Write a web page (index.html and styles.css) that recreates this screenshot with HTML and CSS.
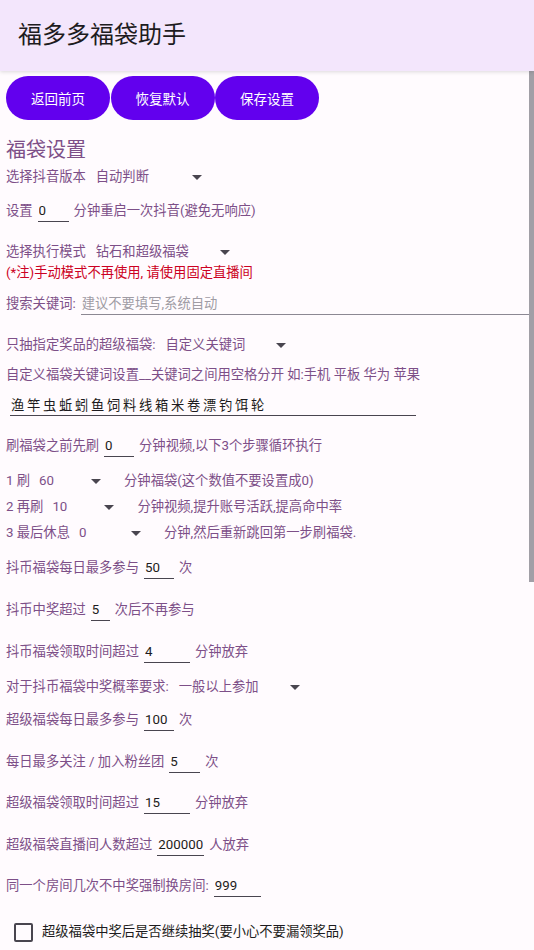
FILE: index.html
```html
<!DOCTYPE html>
<html lang="zh-CN">
<head>
<meta charset="utf-8">
<title>福多多福袋助手</title>
<link rel="stylesheet" href="styles.css">
</head>
<body>
<header class="appbar">
  <h1 class="appbar-title">福多多福袋助手</h1>
</header>
<main class="content">
  <div class="actions">
    <button class="btn">返回前页</button>
    <button class="btn">恢复默认</button>
    <button class="btn">保存设置</button>
  </div>

  <h2 class="section-title">福袋设置</h2>

  <div class="row gap-3">
    <span>选择抖音版本</span>
    <div class="spinner sp-106"><span>自动判断</span><span class="caret"></span></div>
  </div>

  <div class="row gap-14">
    <span>设置</span>
    <input class="field w-31" value="0">
    <span>分钟重启一次抖音(避免无响应)</span>
  </div>

  <div class="row gap-21">
    <span>选择执行模式</span>
    <div class="spinner sp-134"><span>钻石和超级福袋</span><span class="caret"></span></div>
  </div>

  <div class="row gap-1 warn">(*注)手动模式不再使用, 请使用固定直播间</div>

  <div class="row gap-11">
    <span>搜索关键词:</span>
    <input class="field field-wide" placeholder="建议不要填写,系统自动">
  </div>

  <div class="row gap-21">
    <span>只抽指定奖品的超级福袋:</span>
    <div class="spinner sp-120"><span>自定义关键词</span><span class="caret"></span></div>
  </div>

  <div class="row gap-10">自定义福袋关键词设置__关键词之间用空格分开 如:手机 平板 华为 苹果</div>

  <div class="row gap-10">
    <input class="field field-keywords" value="渔 竿 虫 蚯 蚓 鱼 饲 料 线 箱 米 卷 漂 钓 饵 轮">
  </div>

  <div class="row gap-21">
    <span>刷福袋之前先刷</span>
    <input class="field w-30" value="0">
    <span>分钟视频,以下3个步骤循环执行</span>
  </div>

  <div class="row gap-15">
    <span>1 刷</span>
    <div class="spinner sp-num"><span>60</span><span class="caret"></span></div>
    <span>分钟福袋(这个数值不要设置成0)</span>
  </div>

  <div class="row gap-6">
    <span>2 再刷</span>
    <div class="spinner sp-num"><span>10</span><span class="caret"></span></div>
    <span>分钟视频,提升账号活跃,提高命中率</span>
  </div>

  <div class="row gap-6">
    <span>3 最后休息</span>
    <div class="spinner sp-num"><span>0</span><span class="caret"></span></div>
    <span>分钟,然后重新跳回第一步刷福袋.</span>
  </div>

  <div class="row gap-15">
    <span>抖币福袋每日最多参与</span>
    <input class="field w-30" value="50">
    <span>次</span>
  </div>

  <div class="row gap-22">
    <span>抖币中奖超过</span>
    <input class="field w-19" value="5">
    <span>次后不再参与</span>
  </div>

  <div class="row gap-22">
    <span>抖币福袋领取时间超过</span>
    <input class="field w-46" value="4">
    <span>分钟放弃</span>
  </div>

  <div class="row gap-15">
    <span>对于抖币福袋中奖概率要求:</span>
    <div class="spinner sp-121"><span>一般以上参加</span><span class="caret"></span></div>
  </div>

  <div class="row gap-13">
    <span>超级福袋每日最多参与</span>
    <input class="field w-30" value="100">
    <span>次</span>
  </div>

  <div class="row gap-22">
    <span>每日最多关注 / 加入粉丝团</span>
    <input class="field w-31" value="5">
    <span>次</span>
  </div>

  <div class="row gap-21">
    <span>超级福袋领取时间超过</span>
    <input class="field w-46" value="15">
    <span>分钟放弃</span>
  </div>

  <div class="row gap-22">
    <span>超级福袋直播间人数超过</span>
    <input class="field w-47" value="200000">
    <span>人放弃</span>
  </div>

  <div class="row gap-21">
    <span>同一个房间几次不中奖强制换房间:</span>
    <input class="field w-47" value="999">
  </div>

  <label class="row gap-26 check">
    <span class="check-box"></span>
    <span class="check-label">超级福袋中奖后是否继续抽奖(要小心不要漏领奖品)</span>
  </label>
</main>
<div class="scroll-thumb"></div>
</body>
</html>
```

FILE: styles.css
```css
html, body {
  margin: 0;
  padding: 0;
  height: 950px;
  overflow: hidden;
}

body {
  background: #fffbfe;
  font-family: "Roboto", "Noto Sans CJK SC", sans-serif;
  color: #7d4f88;
  font-size: 13.3px;
  position: relative;
}

.appbar {
  position: relative;
  z-index: 1;
  height: 71px;
  background: #f3e6fc;
  box-shadow: 0 1px 4px rgba(0, 0, 0, 0.14);
  display: flex;
  align-items: center;
  padding-left: 18px;
}

.appbar-title {
  margin: 0;
  font-size: 24px;
  font-weight: 400;
  color: #1d1b20;
  line-height: 1;
  padding-bottom: 2px;
}

.content {
  padding: 5px 0 0 6px;
  display: flex;
  flex-direction: column;
}

.actions {
  display: flex;
  gap: 0.5px;
}

.btn {
  width: 104px;
  height: 44px;
  border: none;
  border-radius: 22px;
  background: #6200ee;
  color: #ffffff;
  font-family: inherit;
  font-size: 13.5px;
  padding: 0;
}

.section-title {
  margin: 16px 0 0 0;
  height: 28px;
  line-height: 28px;
  font-size: 20px;
  font-weight: 400;
  color: #7d4f88;
}

.row {
  display: flex;
  align-items: center;
  height: 20px;
  line-height: 20px;
  white-space: nowrap;
}

.gap-1 { margin-top: 1px; }
.gap-3 { margin-top: 3px; }
.gap-6 { margin-top: 6px; }
.gap-10 { margin-top: 10px; }
.gap-11 { margin-top: 11px; }
.gap-13 { margin-top: 13px; }
.gap-14 { margin-top: 14px; }
.gap-15 { margin-top: 15px; }
.gap-21 { margin-top: 21px; }
.gap-22 { margin-top: 22px; }
.gap-26 { margin-top: 26px; }

.warn {
  color: #cc0022;
}

.spinner {
  display: flex;
  align-items: center;
  justify-content: space-between;
  margin-left: 10px;
}

.sp-106 { width: 106px; }
.sp-134 { width: 134px; }
.sp-120 { width: 120px; }
.sp-121 { width: 121px; }
.sp-num {
  width: 62px;
  margin-left: 9px;
  margin-right: 23px;
}

.caret {
  width: 0;
  height: 0;
  border-left: 5px solid transparent;
  border-right: 5px solid transparent;
  border-top: 5px solid #49454f;
}

.field {
  box-sizing: border-box;
  height: 22px;
  margin: 0 5px;
  padding: 0 0 0 1px;
  border: none;
  border-bottom: 1px solid #49454f;
  background: transparent;
  font-family: inherit;
  font-size: 13.3px;
  color: #1d1b20;
  outline: none;
  flex: none;
}

.field::placeholder {
  color: #a09ca4;
}

.w-19 { width: 19px; }
.w-30 { width: 30px; }
.w-31 { width: 31px; }
.w-46 { width: 46px; }
.w-47 { width: 47px; }

.field-wide {
  flex: 1;
  margin-right: 0;
  border-bottom: 1px solid #8c8893;
}

.field-keywords {
  width: 406px;
  margin-left: 4px;
  word-spacing: -0.6px;
}

.check {
  color: #1d1b20;
  font-size: 13.3px;
}

.check-box {
  box-sizing: border-box;
  width: 19px;
  height: 19px;
  margin-left: 8px;
  border: 2px solid #49454f;
  border-radius: 2px;
  flex: none;
}

.check-label {
  margin-left: 9px;
}

.scroll-thumb {
  position: absolute;
  top: 71px;
  right: 0;
  width: 5px;
  height: 511px;
  background: #a19fa6;
}
```
